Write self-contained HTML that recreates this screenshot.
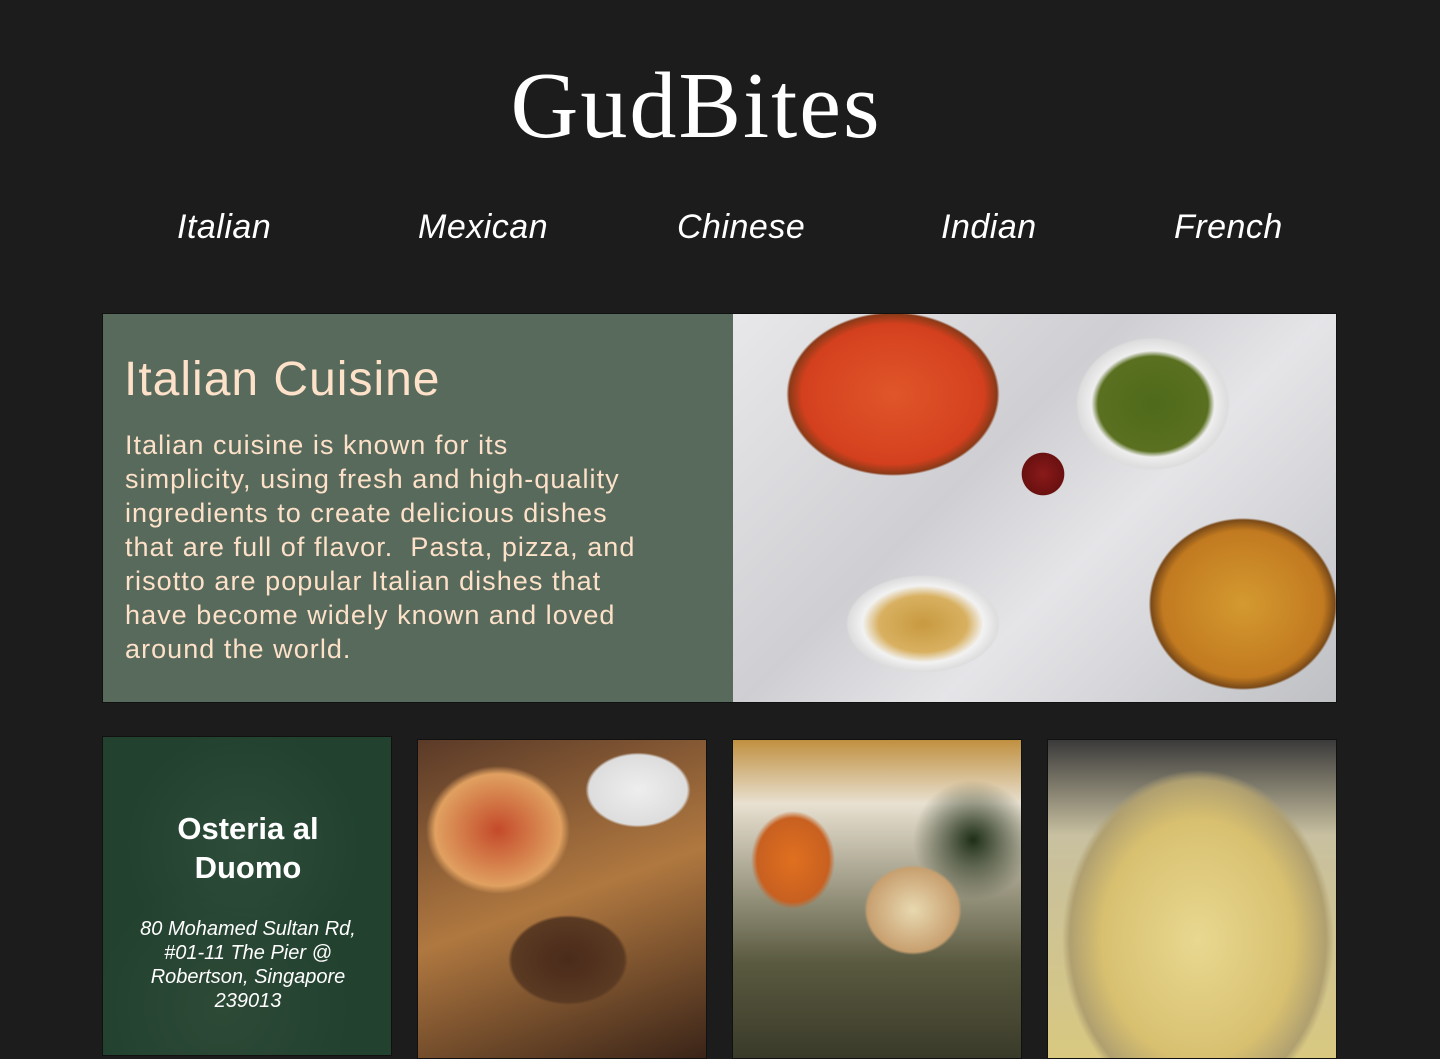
<!DOCTYPE html>
<html><head><style>
*{margin:0;padding:0;box-sizing:border-box}
body{width:1440px;height:1053px;background:#1c1c1c;overflow:hidden;font-family:"Liberation Sans",sans-serif;position:relative}
h1{position:absolute;top:52px;left:0;width:1392px;text-align:center;font-family:"Liberation Serif",serif;font-weight:normal;font-size:94px;color:#fff;letter-spacing:2px}
.nav span{position:absolute;top:208px;font-style:italic;font-weight:300;font-size:34px;color:#fff;letter-spacing:0.5px}
.hero{position:absolute;left:102px;top:313px;width:1235px;height:390px;border:1px solid #111}
.left{position:absolute;left:0;top:0;width:630px;height:388px;background:#586a5c;color:#fde1c8}
.left h2{position:absolute;left:21px;top:38px;font-weight:normal;font-size:48px;letter-spacing:1px}
.left p{position:absolute;left:22px;top:114px;width:600px;font-size:27px;line-height:34px;letter-spacing:1.05px}
.img{position:absolute;left:630px;top:0;width:603px;height:388px;background:
radial-gradient(ellipse 130px 100px at 160px 80px,#e0562a 0,#d4401e 70%,#8a3a18 80%,transparent 82%),
radial-gradient(ellipse 110px 95px at 420px 90px,#4d6a1a 0,#5a7020 50%,#eee 56%,#ddd 68%,transparent 70%),
radial-gradient(ellipse 115px 105px at 510px 290px,#d49a30 0,#c27a20 70%,#7a4a18 80%,transparent 82%),
radial-gradient(ellipse 110px 70px at 190px 310px,#c89a40 0,#d8b060 40%,#f2f2f2 55%,#ddd 68%,transparent 70%),
radial-gradient(circle 30px at 310px 160px,#8a1a1a 0,#6a1010 70%,transparent 72%),
linear-gradient(135deg,#e8e8ea,#cfcfd3 40%,#e5e5e8 60%,#bfc0c4);}
.card{position:absolute;top:739px;width:290px;height:320px;border:1px solid #111}
.c1{left:102px;top:736px;background:radial-gradient(circle 120px at 140px 110px,#2e4c3a,transparent),radial-gradient(circle 130px at 120px 270px,#2d4a37,transparent),#22412f;color:#fff;text-align:center}
.c1 h3{position:absolute;top:72px;left:0;width:290px;font-size:31px;line-height:39px}
.c1 p{position:absolute;top:180px;left:0;width:290px;font-style:italic;font-size:20px;line-height:24px}
.c2{left:417px;background:radial-gradient(ellipse 90px 80px at 80px 90px,#c44a2a,#e0a060 70%,transparent 80%),radial-gradient(ellipse 80px 60px at 150px 220px,#4a2a1a,#5a3a22 70%,transparent 75%),radial-gradient(ellipse 70px 50px at 220px 50px,#eee,#ddd 70%,transparent 75%),linear-gradient(160deg,#5a3a28,#b07840 50%,#3a2418)}
.c3{left:732px;background:radial-gradient(ellipse 65px 60px at 180px 170px,#e8d8b0,#c8a070 70%,transparent 75%),radial-gradient(ellipse 60px 70px at 60px 120px,#e07020,#c86020 60%,transparent 70%),radial-gradient(ellipse 60px 60px at 240px 100px,#1e2e18,transparent),linear-gradient(180deg,#c09040 0,#e8e0d0 20%,#5a5a40 70%,#3a3a2a)}
.c4{left:1047px;background:radial-gradient(ellipse 160px 200px at 150px 200px,#e8d890,#d8c070 60%,#b0a070 80%,transparent 85%),linear-gradient(180deg,#3a3a3a,#c8c0a0 30%,#d8c880)}
</style></head><body>
<h1>GudBites</h1>
<div class="nav"><span style="left:177px">Italian</span><span style="left:418px">Mexican</span><span style="left:677px">Chinese</span><span style="left:941px">Indian</span><span style="left:1174px">French</span></div>
<div class="hero"><div class="left"><h2>Italian Cuisine</h2><p>Italian cuisine is known for its<br>simplicity, using fresh and high-quality<br>ingredients to create delicious dishes<br>that are full of flavor.&nbsp; Pasta, pizza, and<br>risotto are popular Italian dishes that<br>have become widely known and loved<br>around the world.</p></div><div class="img"></div></div>
<div class="card c1"><h3>Osteria al<br>Duomo</h3><p>80 Mohamed Sultan Rd,<br>#01-11 The Pier @<br>Robertson, Singapore<br>239013</p></div>
<div class="card c2"></div><div class="card c3"></div><div class="card c4"></div>
</body></html>
